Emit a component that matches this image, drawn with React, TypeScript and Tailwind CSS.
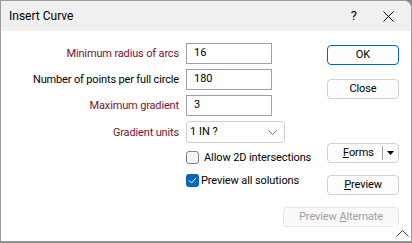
import React from "react";

const font = { fontFamily: 'Roboto, "Noto Sans", sans-serif' };

function Label({ children, dark }: { children: React.ReactNode; dark?: boolean }) {
  return (
    <div className={`w-[178px] shrink-0 whitespace-nowrap text-right text-[11px] leading-none tracking-[-0.15px] ${dark ? "text-[#000000]" : "text-[#7a1034]"}`}>
      {children}
    </div>
  );
}

function TextInput({ value }: { value: string }) {
  return (
    <div className="ml-[7px] flex h-[21px] w-[86px] shrink-0 items-center border border-[#a0a0a0] bg-white pl-[7px] text-[11px] text-black">
      {value}
    </div>
  );
}

function Btn({ children, primary, disabled, wide }: { children: React.ReactNode; primary?: boolean; disabled?: boolean; wide?: boolean }) {
  return (
    <div
      className={`flex h-[20px] ${wide ? "w-[116px]" : "w-[72px]"} items-center justify-center whitespace-nowrap rounded-[4px] border text-[11px] tracking-[-0.1px] ${
        primary
          ? "border-[#0067c0] bg-[#fdfdfd] text-black"
          : disabled
          ? "border-[#e5e5e5] bg-[#f9f9f9] text-[#a0a0a0]"
          : "border-[#d0d0d0] bg-[#fdfdfd] text-black"
      }`}
    >
      {children}
    </div>
  );
}

export default function App() {
  return (
    <div className="h-[243px] w-[412px] bg-[#8a8a8a]" style={font}>
      <div className="relative flex h-[242px] w-[412px] flex-col overflow-hidden rounded-tr-[8px] border border-[#9a9a9a] bg-white">
        {/* Title bar */}
        <div className="flex h-[30px] shrink-0 items-center bg-[#f0f0f0]">
          <div className="ml-[8px] text-[12px] text-black">Insert Curve</div>
          <div className="ml-auto mr-[26px] text-[13px] text-black">?</div>
          <svg width="11" height="11" viewBox="0 0 11 11" className="mr-[17px]">
            <path d="M0.5 0.5 L10.5 10.5 M10.5 0.5 L0.5 10.5" stroke="#000" strokeWidth="1" />
          </svg>
        </div>
        {/* Body */}
        <div className="flex flex-1">
          {/* Left form */}
          <div className="flex min-w-0 flex-1 flex-col pt-[12px]">
            <div className="flex items-center">
              <Label>Minimum radius of arcs</Label>
              <TextInput value="16" />
            </div>
            <div className="mt-[5px] flex items-center">
              <Label dark>Number of points per full circle</Label>
              <TextInput value="180" />
            </div>
            <div className="mt-[5px] flex items-center">
              <Label>Maximum gradient</Label>
              <TextInput value="3" />
            </div>
            <div className="mt-[5px] flex items-center">
              <Label>Gradient units</Label>
              <div className="ml-[7px] flex h-[22px] w-[99px] shrink-0 items-center justify-between rounded-[3px] border border-[#d0d0d0] bg-white pl-[3px] pr-[7px] text-[11px] text-black">
                <span>1 IN ?</span>
                <svg width="9" height="5" viewBox="0 0 9 5">
                  <path d="M0.5 0.5 L4.5 4.5 L8.5 0.5" stroke="#707070" fill="none" strokeWidth="1" />
                </svg>
              </div>
            </div>
            <div className="ml-[185px] mt-[8px] flex h-[13px] items-center whitespace-nowrap">
              <div className="h-[13px] w-[13px] shrink-0 rounded-[3px] border border-[#808080] bg-[#f5f5f5]" />
              <span className="ml-[5px] text-[11px] leading-none tracking-[-0.1px] text-black">Allow 2D intersections</span>
            </div>
            <div className="ml-[185px] mt-[10px] flex h-[13px] items-center whitespace-nowrap">
              <div className="flex h-[13px] w-[13px] shrink-0 items-center justify-center rounded-[3px] bg-[#0067c0]">
                <svg width="9" height="7" viewBox="0 0 9 7">
                  <path d="M1 3.5 L3.5 6 L8 1" stroke="#fff" fill="none" strokeWidth="1" />
                </svg>
              </div>
              <span className="ml-[2px] text-[11px] leading-none tracking-[-0.1px] text-black">Preview all solutions</span>
            </div>
          </div>
          {/* Right buttons */}
          <div className="mr-[12px] flex shrink-0 flex-col items-end pt-[14px]">
            <Btn primary>OK</Btn>
            <div className="mt-[14px]">
              <Btn>Close</Btn>
            </div>
            <div className="mt-[44px] flex h-[20px] w-[72px] items-center rounded-[4px] border border-[#d0d0d0] bg-[#fdfdfd] text-[11px] tracking-[-0.1px] text-black">
              <span className="ml-[15px]">
                <u>F</u>orms
              </span>
              <div className="ml-auto h-[14px] w-px bg-[#a0a0a0]" />
              <svg width="7" height="4" viewBox="0 0 7 4" className="mx-[4px]">
                <path d="M0 0 L7 0 L3.5 4 Z" fill="#000" />
              </svg>
            </div>
            <div className="mt-[12px]">
              <Btn>
                <span>
                  <u>P</u>review
                </span>
              </Btn>
            </div>
            <div className="mt-[12px]">
              <Btn disabled wide>
                <span>
                  Preview <u>A</u>lternate
                </span>
              </Btn>
            </div>
          </div>
        </div>
        {/* Collapse chevron */}
        <div className="absolute bottom-0 right-0 flex h-[16px] w-[18px] items-center justify-center bg-white">
          <svg width="13" height="7" viewBox="0 0 13 7">
            <path d="M0.5 6.5 L6.5 0.5 L12.5 6.5" stroke="#505050" fill="none" strokeWidth="1" />
          </svg>
        </div>
      </div>
    </div>
  );
}
